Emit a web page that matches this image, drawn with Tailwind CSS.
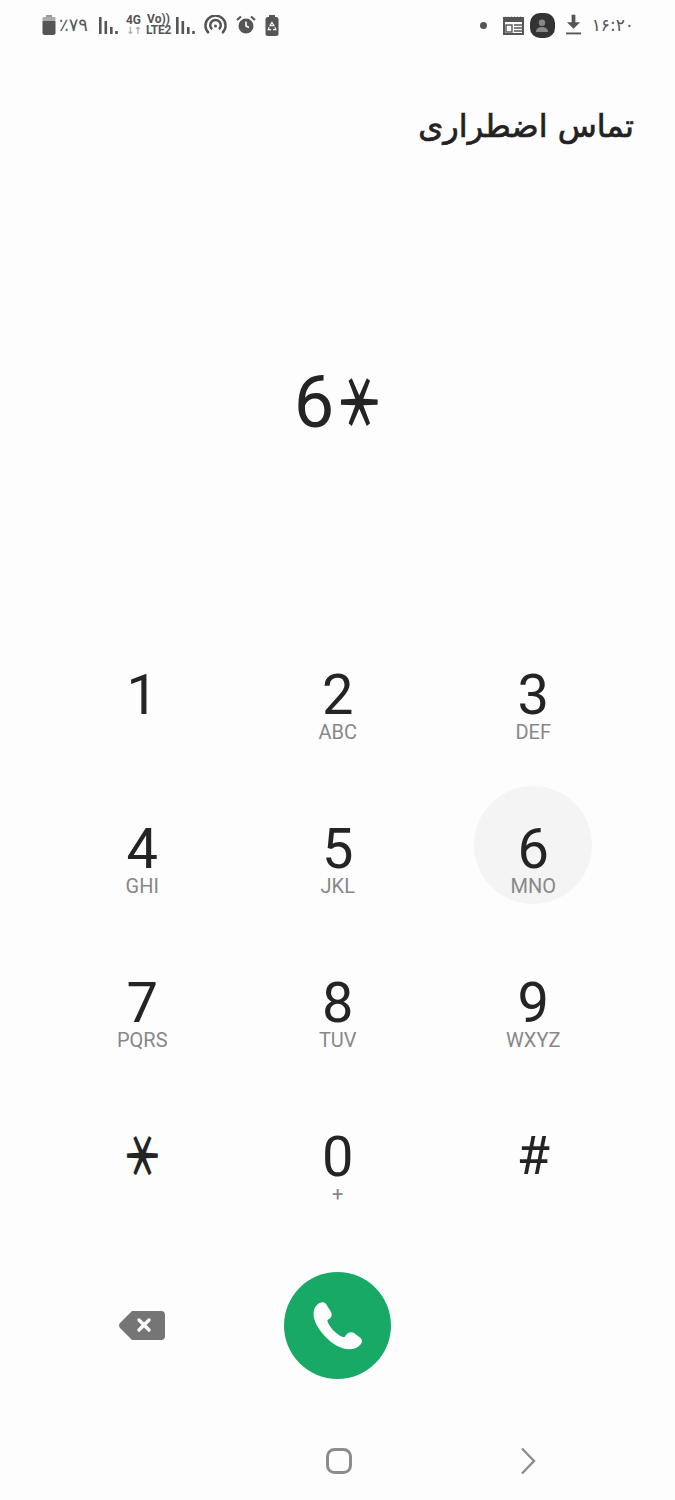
<!DOCTYPE html>
<html lang="fa">
<head>
    <meta charset="UTF-8">
    <title>Emergency call</title>
    <script src="https://cdn.jsdelivr.net/npm/@tailwindcss/browser@4"></script>
</head>
<body class="bg-[#fdfdfd] font-['Roboto','DejaVu_Sans',sans-serif] text-[#242424]">
    <div class="w-[675px] h-[1500px] overflow-hidden">

        <!-- Status bar -->
        <div dir="ltr" class="h-[50px] flex items-center pl-[42px] pr-[41px] text-[#555]">
            <svg class="w-[14px] h-[22px]" viewBox="0 0 14 22"><path d="M4 1h6v3H4z" fill="#999"/><rect x="0.5" y="3" width="13" height="4" rx="1" fill="#aaa"/><path d="M0.5 7h13v12a2 2 0 0 1-2 2h-9a2 2 0 0 1-2-2z" fill="#555"/></svg>
            <span class="ml-[3px] w-[30px] text-[18px] leading-none font-['DejaVu_Sans',sans-serif]">٪۷۹</span>
            <svg class="ml-[10px] w-[19px] h-[20px]" viewBox="0 0 19 20" fill="#555"><rect x="0" y="2" width="2.6" height="17"/><rect x="5.5" y="6" width="2.6" height="13"/><rect x="11" y="12" width="2.6" height="7"/><rect x="16.2" y="16" width="2.6" height="3"/></svg>
            <div class="ml-[7px] w-[17px] flex flex-col items-center text-[12px] leading-[11px] font-bold">
                <span>4G</span>
                <span class="text-[#aaa] text-[10px] leading-[10px] tracking-[-1px]">↓↑</span>
            </div>
            <div class="ml-[3px] w-[27px] flex flex-col items-center text-[12px] leading-[11px] font-bold">
                <span>Vo))</span>
                <span class="tracking-[-0.3px]">LTE2</span>
            </div>
            <svg class="ml-[4px] w-[19px] h-[20px]" viewBox="0 0 19 20" fill="#555"><rect x="0" y="2" width="2.6" height="17"/><rect x="5.5" y="6" width="2.6" height="13"/><rect x="11" y="12" width="2.6" height="7"/><rect x="16.2" y="16" width="2.6" height="3"/></svg>
            <svg class="ml-[9px] w-[23px] h-[20px]" viewBox="0 0 24 20" fill="none" stroke="#555" stroke-width="2.6"><path d="M5 18.5A10.5 10.5 0 1 1 19 18.5"/><path d="M8.5 14.5A5.5 5.5 0 1 1 15.5 14.5"/><circle cx="12" cy="11" r="1.6" fill="#555" stroke="none"/></svg>
            <svg class="ml-[9px] w-[20px] h-[20px]" viewBox="0 0 20 20"><circle cx="10" cy="11" r="7.5" fill="#555"/><path d="M10 6.5V11l3 1.5" stroke="#fdfdfd" stroke-width="1.6" fill="none"/><path d="M1 5l4-3.5M19 5l-4-3.5" stroke="#555" stroke-width="2.2"/></svg>
            <svg class="ml-[9px] w-[14px] h-[21px]" viewBox="0 0 14 21"><rect x="4" y="0" width="6" height="3" fill="#555"/><rect x="0.5" y="2" width="13" height="19" rx="2.5" fill="#555"/><path d="M7 7.5l2 3.2H5zM4.2 12.2l-1 2.4h3M9.8 12.2l1 2.4H8" stroke="#fdfdfd" stroke-width="1.2" fill="none"/></svg>

            <span class="ml-auto w-[7px] h-[7px] rounded-full bg-[#555]"></span>
            <svg class="ml-[16px] w-[21px] h-[19px]" viewBox="0 0 21 19" fill="none" stroke="#555"><rect x="1" y="2" width="19" height="16" stroke-width="2"/><path d="M1 6V1.5l1.5-1 1.5 1 1.5-1 1.5 1 1.5-1 1.5 1 1.5-1 1.5 1 1.5-1 1.5 1 1.5-1 1.5 1V6z" fill="#555" stroke="none"/><path d="M11 9h8M11 12h8M11 15h8" stroke-width="1.4"/><rect x="3" y="9" width="6" height="7" stroke-width="1.4"/></svg>
            <div class="ml-[6px] w-[25px] h-[25px] rounded-[10px] bg-[#333] flex items-center justify-center">
                <svg class="w-[12px] h-[13px]" viewBox="0 0 13 14" fill="#888"><circle cx="6.5" cy="4" r="3.5"/><path d="M0 14c0-4 3-5.5 6.5-5.5S13 10 13 14z"/></svg>
            </div>
            <svg class="ml-[11px] w-[15px] h-[22px]" viewBox="0 0 16 22" fill="#555"><path d="M6 0h4v8h5l-7 7-7-7h5z"/><rect x="0" y="19" width="16" height="2"/></svg>
            <span class="ml-[11px] text-[17px] leading-none font-['DejaVu_Sans',sans-serif]">۱۶:۲۰</span>
        </div>

        <!-- Title -->
        <h1 dir="rtl" class="mt-[51px] h-[50px] pr-[41px] text-[32px] leading-[50px] font-normal text-[#222] [-webkit-text-stroke:0.7px_#222] font-['DejaVu_Sans',sans-serif]">تماس اضطراری</h1>

        <!-- Dialled number -->
        <div class="mt-[212px] pl-[3px] h-[80px] flex items-center justify-center text-[72px] leading-[80px]">
            <span>6</span><span class="rotate-90 scale-x-[1.35] scale-y-[0.95] translate-x-[3px] -translate-y-[1px] text-[50px] leading-[50px] font-semibold font-['Noto_Sans_CJK_SC',sans-serif]">＊</span>
        </div>

        <!-- Keypad -->
        <div class="mt-[223px] pl-[44.5px] grid grid-cols-[repeat(3,195.5px)] auto-rows-[80px] gap-y-[74px]">
            <div class="flex flex-col items-center pt-[3px]"><span class="text-[56px] leading-[53px]">1</span></div>
            <div class="flex flex-col items-center pt-[3px]"><span class="text-[56px] leading-[53px]">2</span><span class="text-[20px] leading-[20px] text-[#888]">ABC</span></div>
            <div class="flex flex-col items-center pt-[3px]"><span class="text-[56px] leading-[53px]">3</span><span class="text-[20px] leading-[20px] text-[#888]">DEF</span></div>
            <div class="flex flex-col items-center pt-[3px]"><span class="text-[56px] leading-[53px]">4</span><span class="text-[20px] leading-[20px] text-[#888]">GHI</span></div>
            <div class="flex flex-col items-center pt-[3px]"><span class="text-[56px] leading-[53px]">5</span><span class="text-[20px] leading-[20px] text-[#888]">JKL</span></div>
            <div class="relative flex flex-col items-center pt-[3px]">
                <span class="absolute top-[-34px] left-[38.5px] w-[118px] h-[118px] rounded-full bg-[#f4f4f4]"></span>
                <span class="relative text-[56px] leading-[53px]">6</span><span class="relative text-[20px] leading-[20px] text-[#888]">MNO</span>
            </div>
            <div class="flex flex-col items-center pt-[3px]"><span class="text-[56px] leading-[53px]">7</span><span class="text-[20px] leading-[20px] text-[#888]">PQRS</span></div>
            <div class="flex flex-col items-center pt-[3px]"><span class="text-[56px] leading-[53px]">8</span><span class="text-[20px] leading-[20px] text-[#888]">TUV</span></div>
            <div class="flex flex-col items-center pt-[3px]"><span class="text-[56px] leading-[53px]">9</span><span class="text-[20px] leading-[20px] text-[#888]">WXYZ</span></div>
            <div class="flex flex-col items-center pt-[3px]"><span class="rotate-90 scale-x-[1.32] scale-y-[0.95] translate-x-[3px] -translate-y-[2px] text-[42px] leading-[53px] font-semibold font-['Noto_Sans_CJK_SC',sans-serif]">＊</span></div>
            <div class="flex flex-col items-center pt-[3px]"><span class="text-[56px] leading-[53px]">0</span><span class="text-[20px] leading-[20px] text-[#888]">+</span></div>
            <div class="flex flex-col items-center pt-[3px]"><span class="text-[54px] leading-[50px]">#</span></div>
        </div>

        <!-- Call row -->
        <div class="mt-[64px] pl-[44.5px] grid grid-cols-[repeat(3,195.5px)] h-[107px] items-center justify-items-center">
            <svg class="w-[46px] h-[31px]" viewBox="0 0 46 31"><path d="M13 1h29a4 4 0 0 1 4 4v21a4 4 0 0 1-4 4H13L1 18a4 4 0 0 1 0-5z" fill="#757575"/><path d="M20 10l10 10M30 10L20 20" stroke="#fdfdfd" stroke-width="3.4" stroke-linecap="round"/></svg>
            <div class="w-[107px] h-[107px] rounded-full bg-[#18a966]">
                <svg class="w-[107px] h-[107px]" viewBox="0 0 107 107"><path fill="#fdfdfd" d="M33 33C36 29.5 40 29.5 42 32L47 40C48.5 43 47.5 45.5 45 47L43.5 48C43 49 45 54 50 59C55 64 59 65.5 60.5 65L62.5 62.5C64.5 60 67.5 59.5 70 61L76 65.5C78.5 67.5 78.5 70.5 76.5 72.5C72 77.5 65 78.5 58 76C50 73 44 68 39 62C33 55 28 46 30 38C30.5 36 31.5 34.5 33 33Z"/></svg>
            </div>
        </div>

        <!-- Nav bar -->
        <div class="mt-[68px] pl-[326px] flex items-center">
            <svg class="w-[26px] h-[26px]" viewBox="0 0 26 26" fill="none" stroke="#8c8c8c" stroke-width="3"><rect x="1.5" y="1.5" width="23" height="23" rx="7"/></svg>
            <svg class="ml-[168px] w-[16px] h-[28px]" viewBox="0 0 16 28" fill="none" stroke="#8c8c8c" stroke-width="2.4"><path d="M2 1.5L14 14L2 26.5"/></svg>
        </div>
    </div>
</body>
</html>
